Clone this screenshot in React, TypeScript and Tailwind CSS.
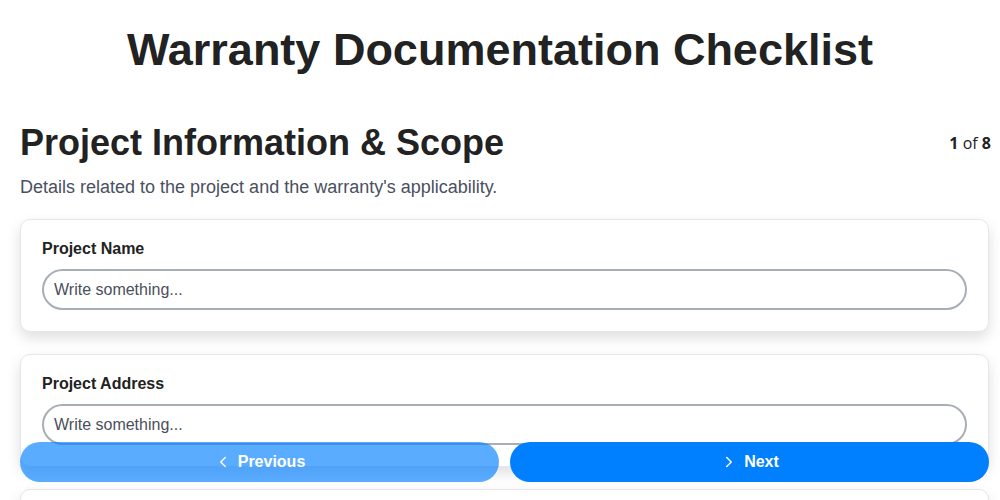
import { ChevronLeft, ChevronRight } from "lucide-react"

type Field = {
  label: string
}

const fields: Field[] = [
  { label: "Project Name" },
  { label: "Project Address" },
  { label: "Warranty Start Date" },
]

export default function App() {
  return (
    <div className="min-h-screen bg-white font-['Liberation_Sans',Arial,sans-serif] text-[#222222]">
      {/* タイトル */}
      <header className="pt-[22px] pb-[43px] text-center">
        <h1 className="text-[45px] font-bold leading-[56px] text-[#222222]">
          Warranty Documentation Checklist
        </h1>
      </header>

      <main className="pl-5 pr-[11px] pb-24">
        <div className="flex items-start justify-between">
          <h2 className="text-[36px] font-bold leading-[44px]">
            Project Information &amp; Scope
          </h2>
          <div className="-mr-[2px] pt-[10px] text-[16px] leading-[24px] font-['Open_Sans',sans-serif]">
            <span className="font-bold">1</span> of <span className="font-bold">8</span>
          </div>
        </div>
        <p className="mt-[10px] text-[18px] leading-[24px] text-[#4a5060]">
          Details related to the project and the warranty's applicability.
        </p>

        <div className="mt-[20px] flex flex-col gap-[22px]">
          {fields.map((f) => (
            <div
              key={f.label}
              className="rounded-[10px] border border-[#e6e6ec] bg-white px-[21px] pt-[18px] pb-[21px] shadow-[0_6px_14px_rgba(0,0,0,0.13)]"
            >
              <label className="block text-[16px] font-bold leading-[22px] text-[#222222]">
                {f.label}
              </label>
              <input
                className="mt-[9px] block h-[41px] w-full rounded-full border-2 border-[#a7aeb8] bg-white px-[10px] text-[16px] text-[#333] outline-none placeholder:text-[#4b4f5a]"
                placeholder="Write something..."
              />
            </div>
          ))}
        </div>
      </main>

      {/* フッターボタン */}
      <footer className="fixed bottom-[18px] left-5 right-[11px] flex gap-[11px]">
        <button className="flex h-[40px] flex-1 items-center justify-center gap-[6px] rounded-full bg-[#0080ff] text-[16px] font-bold text-white opacity-65">
          <ChevronLeft size={18} strokeWidth={2} />
          Previous
        </button>
        <button className="flex h-[40px] flex-1 items-center justify-center gap-[6px] rounded-full bg-[#0080ff] text-[16px] font-bold text-white">
          <ChevronRight size={18} strokeWidth={2} />
          Next
        </button>
      </footer>
    </div>
  )
}
